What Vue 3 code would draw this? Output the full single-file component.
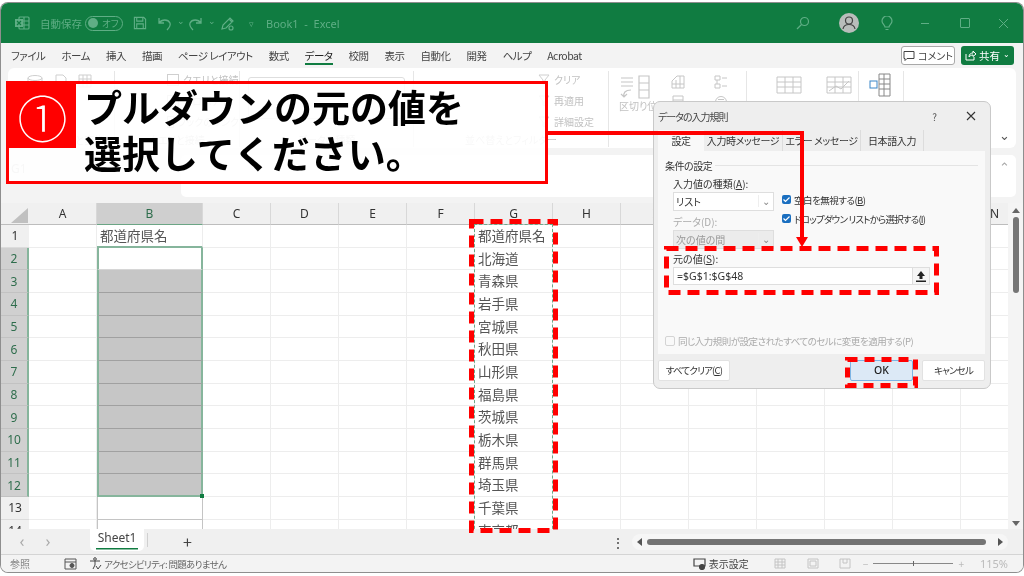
<script setup>
const menu = ['ファイル', 'ホーム', '挿入', '描画', 'ページ レイアウト', '数式', 'データ', '校閲', '表示', '自動化', '開発', 'ヘルプ', 'Acrobat']
const cols = ['A', 'B', 'C', 'D', 'E', 'F', 'G', 'H', 'I', 'J', 'K', 'L', 'M', 'N']
const rows = [1, 2, 3, 4, 5, 6, 7, 8, 9, 10, 11, 12, 13, 14]
const prefs = ['都道府県名', '北海道', '青森県', '岩手県', '宮城県', '秋田県', '山形県', '福島県', '茨城県', '栃木県', '群馬県', '埼玉県', '千葉県', '東京都']

function cellClass(r, c) {
  if (c !== 'B') return ''
  if (r === 1) return 'b-top'
  if (r === 2) return 'sel sel-first'
  if (r === 12) return 'sel sel-gray sel-last'
  if (r < 12) return 'sel sel-gray'
  return 'b-after'
}
function cellText(r, c) {
  if (c === 'B' && r === 1) return '都道府県名'
  if (c === 'G') return prefs[r - 1]
  return ''
}
</script>

<template>
  <div class="page">
    <div class="window">

      <div class="titlebar">
        <svg class="ti" width="16" height="16" viewBox="0 0 16 16" fill="none" stroke="#5fae85" stroke-width="1.2">
          <rect x="5" y="2" width="10" height="12" rx="1" />
          <path d="M10 2v12M5 6h10M5 10h10" />
          <rect x="1" y="4" width="8" height="8" fill="#5fae85" stroke="none" />
          <path d="M3 6l4 4M7 6l-4 4" stroke="#107c41" />
        </svg>
        <span class="autosave">自動保存</span>
        <span class="toggle"><i></i><b>オフ</b></span>
        <svg class="save" width="14" height="14" viewBox="0 0 15 15" fill="none" stroke="#5fae85" stroke-width="1.2">
          <path d="M1.500 1.500h10l2 2v10h-12zM4 1.500v4h6.500v-4M4 13.500v-5h7v5" />
        </svg>
        <svg class="undo" width="15" height="15" viewBox="0 0 15 15" fill="none" stroke="#5fae85" stroke-width="1.3">
          <path d="M2 2v5h5M2 7c3-4 9-4 11 0 1 3-1 5-3 7" />
        </svg>
        <span class="caret">⌄</span>
        <svg class="redo" width="15" height="15" viewBox="0 0 15 15" fill="none" stroke="#5fae85" stroke-width="1.3">
          <path d="M13 2v5H8M13 7C10 3 4 3 2 7c-1 3 1 5 3 7" />
        </svg>
        <span class="caret">⌄</span>
        <svg class="touch" width="15" height="15" viewBox="0 0 15 15" fill="none" stroke="#5fae85" stroke-width="1.2">
          <path d="M2 13l1-4 7-7 3 3-7 7zM9 3l3 3" />
          <circle cx="11" cy="12" r="2" />
        </svg>
        <span class="qat-more">▿</span>
        <span class="doc">Book1 &nbsp;-&nbsp; Excel</span>
        <span class="grow"></span>
        <svg class="search" width="14" height="14" viewBox="0 0 14 14" fill="none" stroke="#5fae85" stroke-width="1.2">
          <circle cx="8.500" cy="5.500" r="4" /><path d="M5.500 8.500L1 13" />
        </svg>
        <svg class="avatar" width="20" height="20" viewBox="0 0 20 20">
          <circle cx="10" cy="10" r="10" fill="#b9bdbb" />
          <circle cx="10" cy="7.500" r="3.500" fill="none" stroke="#444" stroke-width="1.200" />
          <path d="M4 16c1-6 11-6 12 0" fill="none" stroke="#444" stroke-width="1.200" />
        </svg>
        <svg class="bulb" width="12" height="15" viewBox="0 0 12 15" fill="none" stroke="#5fae85" stroke-width="1.2">
          <path d="M4 11c0-2-3-3-3-6a5 5 0 0 1 10 0c0 3-3 4-3 6zM4.500 13.500h3" />
        </svg>
        <span class="min"></span>
        <span class="max"></span>
        <svg class="close" width="11" height="11" viewBox="0 0 11 11" stroke="#5fae85" stroke-width="1"><path d="M1 1l9 9M10 1l-9 9" /></svg>
      </div>

      <div class="menubar">
        <span v-for="m in menu" :key="m" class="menu-item" :class="{ active: m === 'データ' }">{{ m }}</span>
        <span class="grow"></span>
        <span class="comment-btn">
          <svg width="12" height="12" viewBox="0 0 12 12" fill="none" stroke="#444" stroke-width="1"><path d="M1 1.500h10v7H4l-2 2v-2H1z" /></svg>
          コメント
        </span>
        <span class="share-btn">
          <svg width="11" height="11" viewBox="0 0 11 11" fill="none" stroke="#fff" stroke-width="1"><path d="M1 4v6h8V7M4 7c0-3 2-4 4-4V1l3 3-3 2.500V5C6 5 5 6 4 7z" /></svg>
          共有 <small>⌄</small>
        </span>
      </div>

      <div class="ribbon">
        <div class="group g1">
          <div class="r-row">
            <svg width="18" height="18" viewBox="0 0 18 18" fill="none" stroke="#cfcfcf"><ellipse cx="9" cy="4" rx="7" ry="2.500" /><path d="M2 4v10c0 3 14 3 14 0V4" /></svg>
            <svg width="14" height="16" viewBox="0 0 14 16" fill="none" stroke="#cfcfcf"><path d="M2 1h7l3 3v11H2z" /></svg>
            <svg width="14" height="14" viewBox="0 0 14 14" fill="none" stroke="#cfcfcf"><path d="M1 1h12v12H1zM1 5h12M1 9h12M5 1v12M9 1v12" /></svg>
          </div>
          <div class="g-label">データの取得と変換</div>
        </div>
        <div class="group g2">
          <div class="small-line"><i class="sq"></i>クエリと接続</div>
          <div class="small-line"><i class="sq"></i>プロパティ</div>
          <div class="small-line"><i class="sq"></i>ブックのリンク</div>
          <div class="g-label">クエリと接続</div>
        </div>
        <div class="group g3">
          <div class="types"></div>
          <div class="g-label">データの種類</div>
        </div>
        <div class="group g4">
          <div class="filter-list">
            <div class="small-line"><svg width="12" height="12" viewBox="0 0 12 12" fill="none" stroke="#cfcfcf"><path d="M1 1h10L7 6v5L5 10V6z" /></svg>クリア</div>
            <div class="small-line"><svg width="12" height="12" viewBox="0 0 12 12" fill="none" stroke="#cfcfcf"><path d="M1 1h10L7 6v5L5 10V6z" /></svg>再適用</div>
            <div class="small-line"><svg width="12" height="12" viewBox="0 0 12 12" fill="none" stroke="#cfcfcf"><path d="M1 1h10L7 6v5L5 10V6z" /></svg>詳細設定</div>
          </div>
          <div class="g-label">並べ替えとフィルター</div>
        </div>
        <div class="group g5">
          <div class="split">
            <svg width="34" height="24" viewBox="0 0 34 24" fill="none" stroke="#c6c6c6" stroke-width="1.200"><path d="M2 3h12M2 7h12M2 11h12M20 1h10v22H20zM20 8h10M20 15h10M12 15c-6 0-8 3-7 7M2 19l3 3 3-3" /></svg>
            <span class="g5-text">区切り位置</span>
          </div>
          <div class="tools">
            <svg width="14" height="14" viewBox="0 0 14 14" fill="none" stroke="#c6c6c6"><path d="M1 13V6l5-5h7v12zM1 9h12M5 5v8M9 1v12" /></svg>
            <svg width="14" height="14" viewBox="0 0 14 14" fill="none" stroke="#c6c6c6"><path d="M1 1h5v4H1zM1 9h5v4H1zM8 3h5M8 11h5M3 5v4" /></svg>
            <svg width="14" height="14" viewBox="0 0 14 14" fill="none" stroke="#c6c6c6"><path d="M2 1h10v12H2zM2 5h10M2 9h10" /></svg>
            <svg width="14" height="14" viewBox="0 0 14 14" fill="none" stroke="#c6c6c6"><circle cx="7" cy="7" r="5.500" /><path d="M4 7h6M4 4.500h6M4 9.500h6" /></svg>
          </div>
        </div>
        <div class="group g6">
          <svg width="26" height="22" viewBox="0 0 26 22" fill="none" stroke="#c6c6c6"><path d="M1 2h24v16H1zM1 7h24M1 12h24M9 2v16M17 2v16" /></svg>
          <svg width="26" height="22" viewBox="0 0 26 22" fill="none" stroke="#c6c6c6"><path d="M1 2h24v16H1zM1 7h24M1 12h24M9 2v16M17 2v16M3 16l7-5 5 3 8-8" /></svg>
        </div>
        <div class="group g7">
          <svg width="22" height="24" viewBox="0 0 22 24" fill="none" stroke="#888"><path d="M10 1h11v22H10zM10 6h11M10 11h11M10 16h11M15 1v22" /><rect x="1" y="8" width="7" height="7" stroke="#3b86c8" /></svg>
        </div>
        <span class="grow"></span>
        <span class="collapse">⌄</span>
      </div>

      <div class="formula">
        <div class="namebox">G1</div>
        <div class="fx"></div>
        <div class="fbox"><span class="fb-up">⌃</span></div>
      </div>

      <div class="main">
        <div class="sheet">
          <div class="grid">
            <div class="corner"><i></i></div>
            <div v-for="c in cols" :key="c" class="col-h" :class="{ on: c === 'B' }">{{ c }}</div>
            <template v-for="r in rows" :key="r">
              <div class="row-h" :class="{ on: r >= 2 && r <= 12 }">{{ r }}</div>
              <div v-for="c in cols" :key="c" class="cell" :class="cellClass(r, c)">{{ cellText(r, c) }}</div>
            </template>
          </div>
          <div class="ants"></div>
          <div class="handle"></div>
        </div>
        <div class="vscroll">
          <span class="up"></span>
          <span class="thumb"></span>
          <span class="grow"></span>
          <span class="down"></span>
        </div>
      </div>

      <div class="tabbar">
        <span class="nav">‹</span>
        <span class="nav nav2">›</span>
        <span class="tab">Sheet1</span>
        <span class="tab-sep"></span>
        <span class="plus">+</span>
        <span class="grow"></span>
        <span class="dots">⋮</span>
        <div class="hscroll">
          <span class="left"></span>
          <span class="hthumb"></span>
          <span class="right"></span>
        </div>
      </div>

      <div class="statusbar">
        <span class="st-ref">参照</span>
        <svg class="st-ico" width="13" height="12" viewBox="0 0 13 12" fill="none" stroke="#555"><path d="M1 1h11v10H1zM1 4h11" /><circle cx="8" cy="7.500" r="2" fill="#555" /></svg>
        <svg class="st-acc" width="13" height="13" viewBox="0 0 13 13" fill="none" stroke="#444"><circle cx="6" cy="2" r="1.300" /><path d="M1 4h10M6 4v4M6 8l-2 4M7 9l2 3 3-4" /></svg>
        <span class="st-acc-text">アクセシビリティ: 問題ありません</span>
        <span class="grow"></span>
        <svg width="13" height="12" viewBox="0 0 13 12" fill="none" stroke="#444" stroke-width="1.200"><path d="M1 1h11v7H1z" /><circle cx="9" cy="9" r="2.500" fill="#444" /></svg>
        <span class="st-view">表示設定</span>
        <svg class="v1" width="12" height="11" viewBox="0 0 12 11" fill="none" stroke="#c4c4c4"><path d="M1 1h10v9H1zM1 4h10M1 7h10M4 1v9M8 1v9" /></svg>
        <svg class="v2" width="12" height="11" viewBox="0 0 12 11" fill="none" stroke="#c4c4c4"><path d="M1 1h10v9H1zM3 3h6v5H3z" /></svg>
        <svg class="v3" width="12" height="11" viewBox="0 0 12 11" fill="none" stroke="#c4c4c4"><path d="M1 1h10v9H1zM4 1v4h4V1" /></svg>
        <span class="z-minus">−</span>
        <span class="z-track"><i></i></span>
        <span class="z-plus">+</span>
        <span class="z-val">115%</span>
      </div>
    </div>

    <div class="callout">
      <div class="badge">①</div>
      <div class="callout-text">プルダウンの元の値を<br />選択してください。</div>
    </div>

    <div class="dialog">
      <div class="d-title">
        <span class="d-name">データの入力規則</span>
        <span class="grow"></span>
        <span class="d-help">?</span>
        <svg width="10" height="10" viewBox="0 0 10 10" stroke="#333" stroke-width="1.100"><path d="M1 1l8 8M9 1l-8 8" /></svg>
      </div>
      <div class="d-tabs">
        <span class="d-tab sel-tab">設定</span>
        <span class="d-tab t2">入力時メッセージ</span>
        <span class="d-tab t3">エラー メッセージ</span>
        <span class="d-tab t4">日本語入力</span>
      </div>
      <div class="d-panel">
        <div class="legend"><span>条件の設定</span><i></i></div>
        <div class="d-cols">
          <div class="d-left">
            <div class="lab">入力値の種類(<u>A</u>):</div>
            <div class="select">リスト<span class="sel-arrow">⌄</span></div>
            <div class="lab dis">データ(D):</div>
            <div class="select dis-sel">次の値の間<span class="sel-arrow">⌄</span></div>
          </div>
          <div class="d-right">
            <div class="check"><i class="box"><svg width="9" height="9" viewBox="0 0 9 9" fill="none" stroke="#fff" stroke-width="1.200"><path d="M1.500 4.500l2 2 4-4" /></svg></i><span>空白を無視する(<u>B</u>)</span></div>
            <div class="check"><i class="box"><svg width="9" height="9" viewBox="0 0 9 9" fill="none" stroke="#fff" stroke-width="1.200"><path d="M1.500 4.500l2 2 4-4" /></svg></i><span class="check-long">ドロップダウン リストから選択する(<u>I</u>)</span></div>
          </div>
        </div>
        <div class="lab src-lab">元の値(<u>S</u>):</div>
        <div class="src-input">
          <span>=$G$1:$G$48</span>
          <span class="grow"></span>
          <span class="src-btn">
            <svg width="10" height="11" viewBox="0 0 10 11" fill="#222"><path d="M5 0L9 5H6.500v3h-3V5H1zM0 9.500h10V11H0z" /></svg>
          </span>
        </div>
        <span class="grow"></span>
        <div class="apply"><i class="box-off"></i><span>同じ入力規則が設定されたすべてのセルに変更を適用する(P)</span></div>
      </div>
      <div class="d-foot">
        <span class="btn">すべてクリア(<u>C</u>)</span>
        <span class="grow"></span>
        <span class="btn ok">OK</span>
        <span class="btn cancel">キャンセル</span>
      </div>
    </div>

    <svg class="marks" width="1024" height="576" viewBox="0 0 1024 576" fill="none" stroke="#f00">
      <path d="M548 133H802V240" stroke-width="4" />
      <path d="M796 237h12l-6 10z" fill="#f00" stroke="none" />
      <rect x="666.500" y="248.500" width="270" height="44" stroke-width="5" stroke-dasharray="12 7" />
      <rect x="847.500" y="359.500" width="68" height="26" stroke-width="5" stroke-dasharray="10 7" />
      <rect x="471.500" y="221.500" width="84" height="309" stroke-width="5" stroke-dasharray="12 7" />
    </svg>
  </div>
</template>

<style>
html, body { margin: 0; background: #fff; }
</style>

<style scoped>
.page {
  position: relative;
  width: 1024px; height: 576px; overflow: hidden;
  padding: 3px 1px 4px 1px; box-sizing: border-box;
  font-family: "Noto Sans CJK JP", "Noto Sans", sans-serif;
  color: #333;
  background: #fff;
  filter: blur(0.35px);
}
.grow { flex: 1; }
.window {
  height: 100%;
  display: flex; flex-direction: column;
  background: #f3f3f3;
  box-shadow: 0 0 0 1px #8e8e8e;
  border-radius: 7px;
  overflow: hidden;
  font-feature-settings: "palt";
}

/* title bar */
.titlebar {
  height: 40px; flex: none;
  display: flex; align-items: center;
  background: #107c41;
  color: #5fae85;
  font-size: 10.500px;
  padding-left: 13px;
}
.autosave { margin-left: 10px; width: 38px; white-space: nowrap; }
.toggle {
  display: flex; align-items: center; gap: 4px; flex: none;
  width: 38px; height: 15px;
  margin: 0 10px 0 7px; padding-left: 2px; box-sizing: border-box;
  border: 1px solid #5fae85; border-radius: 9px;
  white-space: nowrap;
}
.toggle i { width: 10px; height: 10px; border-radius: 50%; background: #5fae85; flex: none; }
.toggle b { font-weight: 400; font-size: 9.500px; }
.save { flex: none; }
.undo { margin-left: 10px; }
.redo { margin-left: 5px; }
.caret { margin: -6px 0 0 5px; width: 6px; font-size: 9px; }
.touch { margin-left: 6px; }
.qat-more { margin-left: 14px; font-size: 9px; }
.doc { margin-left: 12px; font-family: "Noto Sans", sans-serif; font-size: 11px; white-space: nowrap; }
.search { margin-right: 29px; }
.avatar { margin-right: 22px; }
.bulb { margin-right: 28px; }
.min { width: 8px; height: 1px; background: #5fae85; margin-right: 31px; }
.max { width: 8px; height: 8px; border: 1px solid #5fae85; border-radius: 1px; margin-right: 28px; }
.close { margin-right: 14px; }

/* tabs of the ribbon */
.menubar {
  height: 25px; flex: none;
  display: flex; align-items: center; gap: 16px;
  padding: 0 9px 0 10px;
  font-size: 10.500px;
  color: #444;
}
.menu-item { position: relative; line-height: 25px; white-space: nowrap; letter-spacing: -0.500px; }
.menu-item.active { color: #222; }
.menu-item.active::after {
  content: ""; position: absolute; left: 0; right: 0; bottom: 3px;
  height: 2px; background: #107c41;
}
.comment-btn {
  width: 54px; height: 19px; box-sizing: border-box;
  display: flex; align-items: center; justify-content: center; gap: 3px;
  background: #fff; border: 1px solid #a9a9a9; border-radius: 3px;
  font-size: 10px; margin-right: -10px; white-space: nowrap;
}
.share-btn {
  width: 53px; height: 19px; box-sizing: border-box;
  display: flex; align-items: center; justify-content: center; gap: 3px;
  background: #107c41; color: #fff; border-radius: 3px;
  font-size: 10.500px;
}
.share-btn small { font-size: 8px; margin-top: -5px; }

/* ribbon */
.ribbon {
  height: 80px; flex: none;
  margin: 0 7px;
  display: flex;
  background: #fff;
  border-radius: 6px;
  color: #c2c2c2;
  font-size: 10px;
}
.group {
  box-sizing: border-box;
  margin: 3px 0 1px;
  border-right: 1px solid #e6e6e6;
  display: flex; flex-direction: column;
  position: relative;
}
.g1 { width: 107px; padding: 3px 0 0 18px; }
.g2 { width: 125px; padding: 0 0 0 52px; }
.g3 { width: 174px; padding: 6px 8px 0 8px; }
.g4 { width: 195px; padding-left: 136px; }
.g5 { width: 138px; flex-direction: row; padding: 4px 0 0 10px; gap: 16px; }
.g6 { width: 112px; flex-direction: row; gap: 24px; padding: 4px 0 0 29px; }
.g7 { width: 45px; padding: 2px 0 0 10px; }
.r-row { display: flex; gap: 10px; }
.small-line { display: flex; align-items: center; gap: 4px; height: 21px; white-space: nowrap; }
.g2 .small-line:first-child, .filter-list { margin-top: -2px; }
.filter-list { margin-left: -12px; }
.sq { width: 10px; height: 10px; border: 1px solid #cfcfcf; }
.types { height: 40px; border: 1px solid #dedede; border-radius: 3px; }
.g-label {
  position: absolute; left: 0; right: 0; bottom: 0;
  text-align: center; font-size: 10px; line-height: 14px; white-space: nowrap;
}
.split { display: flex; flex-direction: column; gap: 1px; width: 36px; }
.g5-text { white-space: nowrap; line-height: 12px; }
.tools { display: grid; grid-template-columns: 14px 14px; grid-auto-rows: 20px; gap: 0 29px; }
.collapse { align-self: flex-end; margin: 0 6px 2px 0; font-size: 13px; color: #555; line-height: 22px; }

/* formula bar */
.formula { height: 55px; flex: none; display: flex; padding: 7px 7px 6px; box-sizing: border-box; }
.namebox { width: 150px; height: 27px; padding-left: 3px; font-size: 12px; color: #bbb; line-height: 27px; font-family: "Noto Sans", sans-serif; }
.fx { width: 20px; }
.fbox { flex: 1; background: #fff; border-radius: 5px; text-align: right; padding-right: 6px; color: #aaa; font-size: 13px; }
.fb-up { line-height: 24px; }

/* sheet */
.main { flex: 1; min-height: 0; display: flex; background: #fff; }
.sheet { flex: 1; position: relative; overflow: hidden; }
.grid {
  display: grid;
  grid-template-columns: 28px 68px 106px 68px 68px 68px 68px 78px 68px 68px 68px 68px 68px 68px 68px;
  grid-auto-rows: 22.670px;
  grid-template-rows: 22px;
  font-size: 12.500px;
  font-feature-settings: normal;
}
.corner, .col-h, .row-h { background: #f0f0f0; }
.corner { position: relative; border-bottom: 1px solid #bdbdbd; }
.corner i {
  display: block; width: 0; height: 0; margin: 5px 0 0 10px;
  border-style: solid; border-width: 0 0 15px 17px;
  border-color: transparent transparent #c0c0c0 transparent;
}
.col-h {
  display: flex; align-items: center; justify-content: center;
  border-right: 1px solid #d8d8d8; border-bottom: 1px solid #bdbdbd;
  font-family: "Noto Sans", sans-serif; font-size: 12px; color: #333; box-sizing: border-box;
}
.col-h.on { background: #cfcfcf; color: #2e6d4c; border-bottom: 1px solid #6ba585; }
.row-h {
  display: flex; align-items: center; justify-content: center;
  border-bottom: 1px solid #dcdcdc; box-sizing: border-box;
  font-family: "Noto Sans", sans-serif; font-size: 12px; color: #333;
}
.row-h.on { background: #d0d0d0; color: #2e6d4c; border-right: 2px solid #86b59c; border-bottom-color: #c2c2c2; }
.cell {
  box-sizing: border-box;
  border-right: 1px solid #ededed; border-bottom: 1px solid #ededed;
  padding-left: 3px;
  white-space: nowrap; line-height: 21px;
  color: #555;
  font-size: 13.500px;
}
.b-top { border-bottom: 2px solid #86b59c; }
.b-after { border-left: 1px solid #c4c4c4; border-right: 1px solid #c4c4c4; border-bottom: 1px solid #c4c4c4; }
.sel { border-left: 2px solid #86b59c; border-right: 2px solid #86b59c; }
.sel-first { border-bottom-color: #d6d6d6; }
.sel-gray { background: #c6c6c6; border-bottom-color: #a0a0a0; }
.sel-last { border-bottom: 2px solid #86b59c; }
.ants {
  position: absolute; left: 473px; top: 21px; width: 79px; height: 330px;
  border: 1px dashed #6ea98a; box-sizing: border-box;
}
.handle { position: absolute; left: 199px; top: 291px; width: 4px; height: 4px; background: #107c41; }

.vscroll { width: 15px; flex: none; background: #f4f4f4; display: flex; flex-direction: column; align-items: center; }
.up { margin-top: 5px; border-style: solid; border-width: 0 4px 5px; border-color: transparent transparent #666; }
.thumb { margin-top: 4px; width: 6px; height: 76px; background: #757575; border-radius: 3px; }
.down { margin-bottom: 3px; border-style: solid; border-width: 5px 4px 0; border-color: #666 transparent transparent; }

/* sheet tabs */
.tabbar {
  height: 26px; flex: none;
  display: flex; align-items: flex-start;
  background: #f0f0f0;
  border-bottom: 1px solid #d4d4d4; box-sizing: border-box;
}
.nav { width: 26px; text-align: center; font-size: 16px; line-height: 24px; color: #aaa; font-family: "Noto Sans", sans-serif; margin-left: 8px; }
.nav2 { margin-left: 0; }
.tab {
  width: 54px; height: 22px; margin-left: 29px; box-sizing: border-box;
  background: #fff; border-radius: 0 0 5px 5px;
  text-align: center; font-family: "Noto Sans", sans-serif; font-size: 12px; line-height: 18px; color: #444;
  border-bottom: 2px solid transparent;
  background-image: linear-gradient(#107c41, #107c41);
  background-repeat: no-repeat; background-size: 42px 1.500px; background-position: center 19px;
}
.tab-sep { width: 1px; height: 14px; background: #d0d0d0; margin: 4px 0 0 3px; }
.plus { margin-left: 35px; font-size: 16px; line-height: 24px; color: #444; }
.dots { font-size: 14px; line-height: 26px; color: #444; margin-right: 7px; }
.hscroll {
  width: 376px; height: 16px; margin: 5px 15px 0 0;
  display: flex; align-items: center;
  border-radius: 8px;
  background: #f6f6f6;
  padding: 0 5px; box-sizing: border-box;
}
.left { border-style: solid; border-width: 4px 5px 4px 0; border-color: transparent #555 transparent transparent; }
.hthumb { flex: 1; height: 6px; margin: 0 12px 0 5px; background: #757575; border-radius: 3px; }
.right { border-style: solid; border-width: 4px 0 4px 5px; border-color: transparent transparent transparent #555; }

/* status bar */
.statusbar {
  height: 17px; flex: none;
  display: flex; align-items: center;
  background: #f3f3f3;
  font-size: 10px; color: #555;
}
.st-ref { margin-left: 9px; color: #888; }
.st-ico { margin-left: 34px; }
.st-acc { margin-left: 12px; }
.st-acc-text { margin-left: 2px; color: #666; font-size: 9.500px; letter-spacing: -0.700px; }
.st-view { margin-left: 3px; color: #444; font-size: 10px; }
.v1 { margin-left: 25px; }
.v2 { margin-left: 21px; }
.v3 { margin-left: 20px; }
.z-minus { margin-left: 12px; color: #bbb; }
.z-track { position: relative; width: 80px; height: 1px; background: #888; margin: 0 5px; }
.z-track i { position: absolute; left: 40px; top: -2px; width: 1px; height: 5px; background: #666; }
.z-plus { color: #bbb; }
.z-val { margin: 0 15px 0 16px; color: #bbb; font-family: "Noto Sans", sans-serif; font-size: 11px; }

/* callout over the ribbon */
.callout {
  position: absolute; left: 6px; top: 81px; width: 542px; height: 103px;
  box-sizing: border-box;
  border: 3px solid #f00;
  background: rgba(255, 255, 255, 0.880);
  display: flex; align-items: flex-start;
  color: #000;
}
.badge {
  width: 67px; height: 64px; flex: none;
  background: #f00; color: #fff;
  display: flex; align-items: center; justify-content: center;
  font-size: 50px; line-height: 64px;
  font-weight: 300;
}
.callout-text {
  margin: -1px 0 0 8px;
  font-size: 38px; line-height: 46px; font-weight: 700;
  white-space: nowrap;
}

/* dialog */
.dialog {
  position: absolute; left: 653px; top: 101px; width: 338px; height: 288px;
  box-sizing: border-box;
  display: flex; flex-direction: column;
  background: #eeeeee;
  border: 1px solid #c9c9c9; border-radius: 7px;
  font-size: 10px; color: #333;
  padding: 0 5px 0 4px;
  font-feature-settings: "palt";
}
.d-title { height: 28px; flex: none; display: flex; align-items: center; color: #444; padding-right: 9px; }
.d-name { letter-spacing: -1px; }
.d-help { margin-right: 29px; color: #555; }
.d-tabs { height: 21px; flex: none; display: flex; letter-spacing: -0.400px; }
.d-tab { display: flex; align-items: center; justify-content: center; border-right: 1px solid #dcdcdc; white-space: nowrap; }
.sel-tab { width: 46px; background: #f9f9f9; border: none; }
.t2 { width: 78px; }
.t3 { width: 77px; }
.t4 { width: 62px; }
.d-panel {
  height: 203px; flex: none;
  background: #f9f9f9;
  display: flex; flex-direction: column;
  padding: 6px 7px 6px;
  box-sizing: border-box;
}
.legend { display: flex; align-items: center; gap: 3px; height: 17px; letter-spacing: -0.500px; }
.legend i { flex: 1; height: 1px; background: #e4e4e4; }
.d-cols { display: flex; margin: 1px 0 0 8px; }
.d-left { width: 101px; }
.d-right { margin: 15px 0 0 8px; }
.lab { line-height: 17px; height: 17px; }
.dis { color: #aaa; margin-top: 2px; }
.select {
  height: 19px; box-sizing: border-box;
  border: 1px solid #dedede; background: #fff;
  display: flex; align-items: center; justify-content: space-between;
  padding-left: 2px; font-size: 10px;
}
.sel-arrow { width: 14px; text-align: center; color: #888; border-left: 1px solid #eee; line-height: 12px; margin-top: -2px; }
.dis-sel { background: #ececec; color: #999; }
.check { display: flex; align-items: center; gap: 3px; height: 19px; white-space: nowrap; font-size: 9.500px; letter-spacing: -0.500px; }
.check-long { letter-spacing: -0.800px; }
.box {
  width: 9px; height: 9px; background: #1a6fc0; border-radius: 2px; flex: none;
  display: flex; align-items: center; justify-content: center;
}
.src-lab { margin: 1px 0 0 8px; }
.src-input {
  margin: 0 0 0 8px; width: 257px; height: 18px; flex: none;
  box-sizing: border-box;
  display: flex; align-items: center;
  background: #fff; border: 1px solid #dedede;
  padding-left: 3px;
  font-family: "Noto Sans", sans-serif; font-size: 10.500px; color: #333;
}
.src-btn {
  width: 16px; height: 16px;
  display: flex; align-items: center; justify-content: center;
  background: #f5f5f5; border-left: 1px solid #ddd;
}
.apply { display: flex; align-items: center; gap: 3px; color: #aaa; white-space: nowrap; font-size: 9.500px; letter-spacing: -0.500px; }
.box-off { width: 8px; height: 8px; border: 1px solid #d4d4d4; border-radius: 2px; }
.d-foot { flex: 1; display: flex; align-items: center; padding: 0 0 2px; }
.btn {
  height: 21px; box-sizing: border-box;
  display: flex; align-items: center; justify-content: center;
  background: #fff; border: 1px solid #e2e2e2; border-radius: 2px;
  width: 72px; white-space: nowrap;
  font-size: 9.500px; letter-spacing: -0.800px;
}
.ok { width: 63px; background: #dce9f6; border: 1px solid #7db4e4; color: #222; font-family: "Noto Sans", sans-serif; font-weight: 500; font-size: 10.500px; letter-spacing: 0; }
.cancel { width: 63px; margin-left: 9px; }

.marks { position: absolute; left: 0; top: 0; pointer-events: none; }
</style>
